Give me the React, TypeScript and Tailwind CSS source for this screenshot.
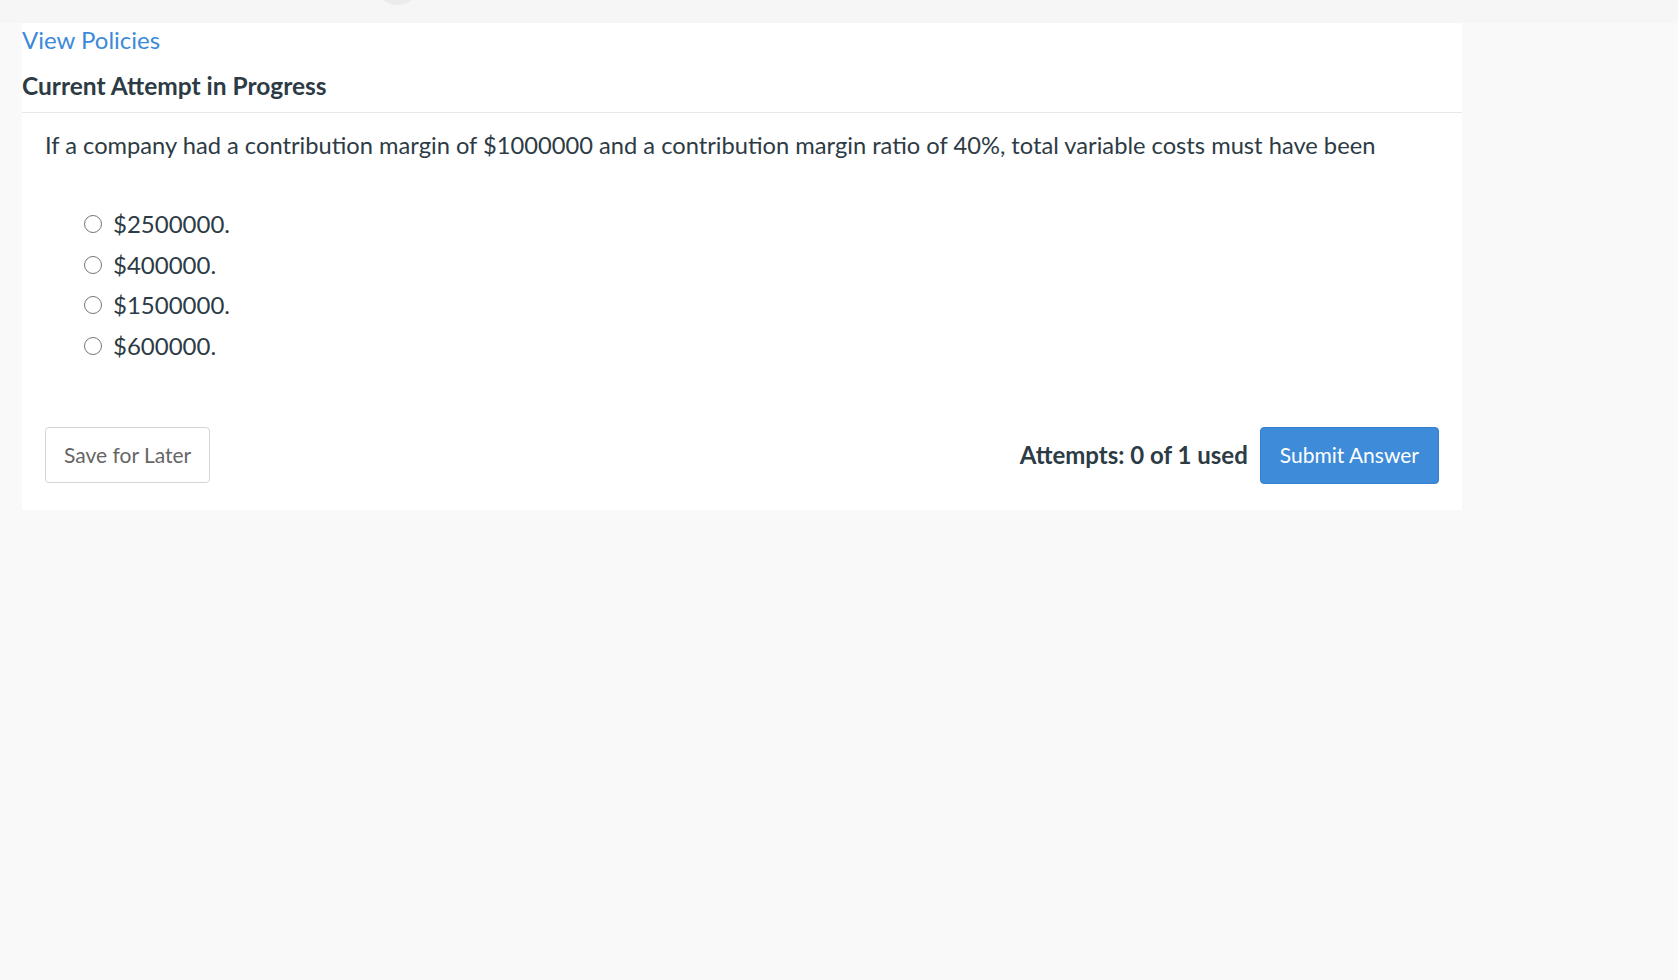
import React from "react";

const options = ["$2500000.", "$400000.", "$1500000.", "$600000."];

export default function App() {
  return (
    <div className="min-h-screen bg-[#f9f9f9] text-[#2d3b45] font-['Lato','Liberation_Sans',sans-serif]">
      {/* top strip */}
      <div className="relative h-[23px] overflow-hidden bg-[#f6f6f6]">
        <div className="absolute left-[375px] top-[-40px] h-[45px] w-[45px] rounded-full bg-[#ebebeb]" />
      </div>

      <div className="ml-[22px] w-[1440px] bg-white">
        <div className="border-b border-[#e8e8e8] pt-[2px] pb-[11px]">
          <a href="#" className="block text-[24px] leading-[30px] text-[#3b8ad9]">
            View Policies
          </a>
          <h2 className="mt-[16px] text-[24.5px] leading-[30px] font-bold">Current Attempt in Progress</h2>
        </div>

        <div className="px-[23px] pt-[17px] pb-[26px]">
          <p className="text-[23.7px] leading-[30px]">
            If a company had a contribution margin of $1000000 and a contribution margin ratio of 40%, total variable costs must have been
          </p>

          <div className="mt-[49px] ml-[39px] flex flex-col gap-[10.5px]">
            {options.map((o) => (
              <label key={o} className="flex items-center gap-[11px] text-[24px] leading-[30px]">
                <span className="h-[18px] w-[18px] rounded-full border border-[#767676] bg-white" />
                {o}
              </label>
            ))}
          </div>

          <div className="mt-[66px] flex items-center justify-between">
            <button className="h-[56px] rounded-[4px] border border-[#d5d5d5] bg-white px-[18px] text-[21px] text-[#666666]">
              Save for Later
            </button>
            <div className="flex items-center gap-[12px]">
              <span className="text-[24px] font-bold">Attempts: 0 of 1 used</span>
              <button className="h-[57px] rounded-[4px] border border-[#3580cc] bg-[#3d8bd9] px-[19px] text-[21px] text-white">
                Submit Answer
              </button>
            </div>
          </div>
        </div>
      </div>
    </div>
  );
}
